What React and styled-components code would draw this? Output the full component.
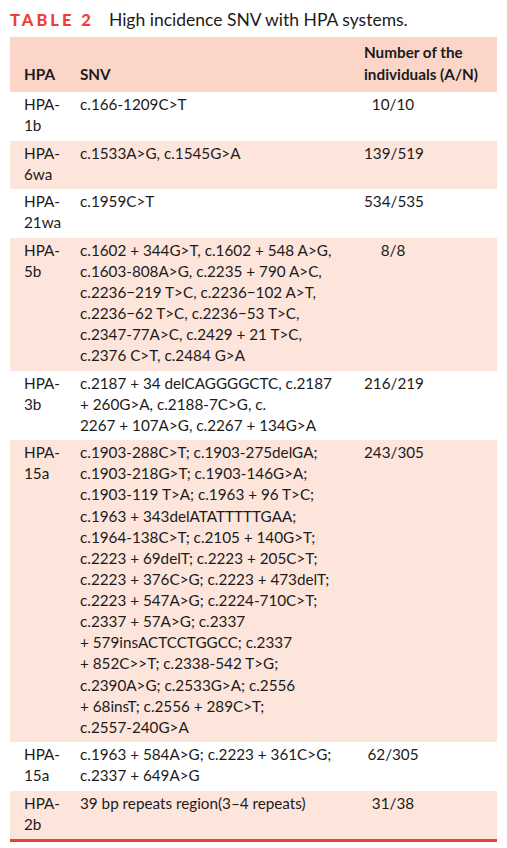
import React from 'react';
import styled, { createGlobalStyle } from 'styled-components';

const GlobalStyle = createGlobalStyle`
  body {
    margin: 0;
    background: #ffffff;
    font-family: Lato, "Open Sans", "Liberation Sans", sans-serif;
    color: #1b1b1b;
  }
`;

const rows = [
  { hpa: ['HPA-', '1b'], snv: ['c.166-1209C>T'], count: '10/10' },
  { hpa: ['HPA-', '6wa'], snv: ['c.1533A>G, c.1545G>A'], count: '139/519' },
  { hpa: ['HPA-', '21wa'], snv: ['c.1959C>T'], count: '534/535' },
  {
    hpa: ['HPA-', '5b'],
    snv: [
      'c.1602 + 344G>T, c.1602 + 548 A>G,',
      'c.1603-808A>G, c.2235 + 790 A>C,',
      'c.2236\u2212219 T>C, c.2236\u2212102 A>T,',
      'c.2236\u221262 T>C, c.2236\u221253 T>C,',
      'c.2347-77A>C, c.2429 + 21 T>C,',
      'c.2376 C>T, c.2484 G>A',
    ],
    count: '8/8',
  },
  {
    hpa: ['HPA-', '3b'],
    snv: [
      'c.2187 + 34 delCAGGGGCTC, c.2187',
      '+ 260G>A, c.2188-7C>G, c.',
      '2267 + 107A>G, c.2267 + 134G>A',
    ],
    count: '216/219',
  },
  {
    hpa: ['HPA-', '15a'],
    snv: [
      'c.1903-288C>T; c.1903-275delGA;',
      'c.1903-218G>T; c.1903-146G>A;',
      'c.1903-119 T>A; c.1963 + 96 T>C;',
      'c.1963 + 343delATATTTTTGAA;',
      'c.1964-138C>T; c.2105 + 140G>T;',
      'c.2223 + 69delT; c.2223 + 205C>T;',
      'c.2223 + 376C>G; c.2223 + 473delT;',
      'c.2223 + 547A>G; c.2224-710C>T;',
      'c.2337 + 57A>G; c.2337',
      '+ 579insACTCCTGGCC; c.2337',
      '+ 852C>>T; c.2338-542 T>G;',
      'c.2390A>G; c.2533G>A; c.2556',
      '+ 68insT; c.2556 + 289C>T;',
      'c.2557-240G>A',
    ],
    count: '243/305',
  },
  {
    hpa: ['HPA-', '15a'],
    snv: ['c.1963 + 584A>G; c.2223 + 361C>G;', 'c.2337 + 649A>G'],
    count: '62/305',
  },
  {
    hpa: ['HPA-', '2b'],
    snv: ['39 bp repeats region(3\u20134 repeats)'],
    count: '31/38',
  },
];

const Page = styled.div`
  padding: 10px 10px 0;
`;

const Caption = styled.div`
  display: flex;
  align-items: baseline;
  gap: 15px;
  height: 27px;
  font-size: 17.5px;
  line-height: 19px;
`;

const Label = styled.span`
  color: #ee3f36;
  font-size: 16.5px;
  font-weight: 900;
  letter-spacing: 3px;
`;

const Table = styled.div`
  border-bottom: 3px solid #ee3f36;
`;

const Row = styled.div`
  display: grid;
  grid-template-columns: 70px 284px 1fr;
  align-items: ${(p) => (p.$head ? 'end' : 'start')};
  background: ${(p) => p.$bg};
  padding: ${(p) => (p.$head ? '5px 0 7px' : '2px 0 4.25px')};
  font-size: 15.25px;
  line-height: ${(p) => (p.$head ? '21.5px' : '21.12px')};
  font-weight: ${(p) => (p.$head ? 700 : 400)};
`;

const Cell = styled.div`
  white-space: nowrap;
  padding-left: ${(p) => p.$pad || 0}px;
`;

const Count = styled.div`
  width: 58px;
  text-align: center;
  white-space: nowrap;
`;

const Lines = ({ items }) =>
  items.map((t, i) => (
    <React.Fragment key={i}>
      {i > 0 && <br />}
      {t}
    </React.Fragment>
  ));

export default function App() {
  return (
    <>
      <GlobalStyle />
      <Page>
        <Caption>
          <Label>TABLE 2</Label>
          <span>High incidence SNV with HPA systems.</span>
        </Caption>
        <Table>
          <Row $head $bg="#fbd6c8">
            <Cell $pad={14}>HPA</Cell>
            <Cell>SNV</Cell>
            <Cell>
              Number of the
              <br />
              individuals (A/N)
            </Cell>
          </Row>
          {rows.map((r, i) => (
            <Row key={i} $bg={i % 2 ? '#fde5dc' : '#ffffff'}>
              <Cell $pad={14}>
                <Lines items={r.hpa} />
              </Cell>
              <Cell>
                <Lines items={r.snv} />
              </Cell>
              <Count>{r.count}</Count>
            </Row>
          ))}
        </Table>
      </Page>
    </>
  );
}
